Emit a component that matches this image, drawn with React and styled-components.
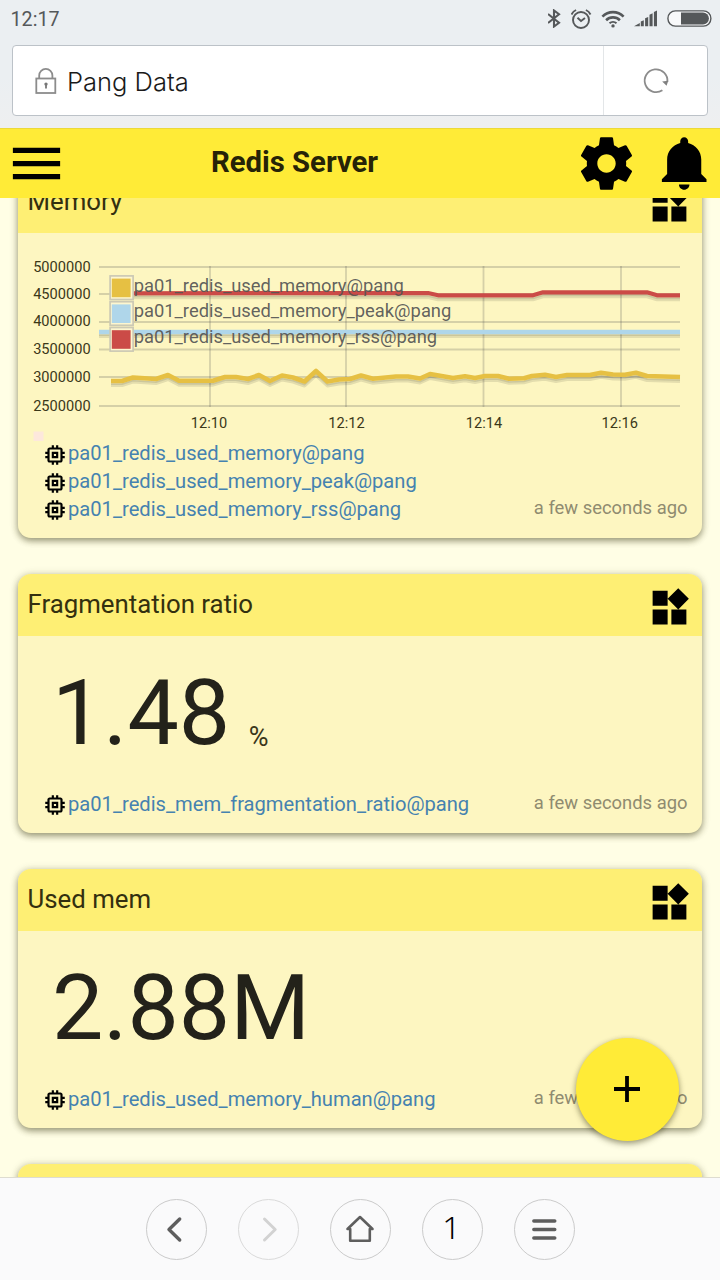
import React from 'react';
import styled, { createGlobalStyle } from 'styled-components';

const GlobalStyle = createGlobalStyle`
  *, *::before, *::after { box-sizing: border-box; }
  body { margin: 0; font-family: Roboto, "Liberation Sans", sans-serif; }
  button { padding: 0; border: 0; background: none; color: inherit; font: inherit; }
  svg { display: block; flex: none; }
`;

const Screen = styled.div`
  position: relative;
  display: flex;
  flex-direction: column;
  width: 720px;
  height: 1280px;
  overflow: hidden;
  background: #fffee5;
`;

/* Phone and browser chrome */
const BrowserTop = styled.div`
  flex: none;
  height: 128px;
  background: linear-gradient(#ebeff2 60%, #eeeff0);
`;

const StatusBar = styled.div`
  display: flex;
  align-items: center;
  justify-content: space-between;
  height: 37px;
  padding: 0 8px 0 10.5px;
  color: #55585a;
`;

const Clock = styled.span`
  font-size: 19.7px;
  line-height: 24px;
  margin-top: 3px;
`;

const StatusIcons = styled.div`
  display: flex;
  align-items: center;
  gap: 9px;
`;

const AddressBar = styled.div`
  display: flex;
  height: 71px;
  margin: 8px 12px 0;
  border: 1px solid #bcc2c8;
  border-radius: 4px;
  background: #fff;
`;

const Address = styled.div`
  flex: 1;
  display: flex;
  align-items: center;
  gap: 10px;
  padding: 2px 0 0 22px;
  color: #1b1b1b;
  font-family: Inter, "Liberation Sans", sans-serif;
  font-size: 25.5px;
  font-weight: 300;
`;

const Reload = styled.button`
  display: flex;
  align-items: center;
  justify-content: center;
  width: 104px;
  border-left: 1px solid #e3e6e8;
`;

/* Application */
const AppBar = styled.header`
  flex: none;
  display: grid;
  grid-template-columns: 75px 1fr 63px 16px 66px;
  align-items: start;
  height: 70px;
  padding: 3px 0 0 5px;
  border-top: 1px solid #ecd93a;
  background: #ffeb37;
`;

const AppTitle = styled.h1`
  margin: 13px 0 0;
  padding-right: 66px;
  font-size: 29.3px;
  line-height: 34px;
  font-weight: 700;
  text-align: center;
  color: #262307;
`;

const BarButton = styled.button`
  display: block;
  width: 63px;
  height: 63px;
`;

const Scroller = styled.main`
  flex: 1;
  min-height: 0;
  overflow: hidden;
`;

const CardList = styled.div`
  display: flex;
  flex-direction: column;
  gap: 36px;
  margin-top: -27px;
  padding: 0 18px;
`;

const Card = styled.section`
  flex: none;
  display: flex;
  flex-direction: column;
  height: ${(p) => p.$height}px;
  border-radius: 13px;
  background: #fdf6c1;
  box-shadow: 0 3px 6px rgba(60, 58, 20, 0.42), 0 1px 9px rgba(60, 58, 20, 0.22);
`;

const CardHeader = styled.div`
  flex: none;
  display: flex;
  justify-content: space-between;
  height: 62px;
  padding: 11px 10px 0 9.5px;
  border-radius: 13px 13px 0 0;
  background: #feef74;
`;

const CardTitle = styled.h2`
  margin: 4px 0 0;
  font-size: 25.8px;
  line-height: 30px;
  font-weight: 400;
  color: #33300f;
`;

const Reading = styled.div`
  flex: 1;
  display: flex;
  align-items: baseline;
  gap: 18.5px;
  padding: 23px 0 0 34px;
  color: #23221a;
  font-size: 91.4px;
  line-height: 107px;
`;

const Unit = styled.span`
  position: relative;
  top: 2px;
  font-size: 27px;
  color: #3a371a;
`;

const CardFooter = styled.div`
  display: flex;
  align-items: flex-end;
  justify-content: space-between;
  padding: 0 14.5px 14px 24px;
`;

const SourceRow = styled.a`
  display: flex;
  align-items: center;
  height: 27.7px;
  color: #4582b0;
  font-size: 20.15px;
  line-height: 26px;

  span { margin-top: -3px; }
`;

const Age = styled.span`
  color: #8f8b70;
  font-size: 18.4px;
  line-height: 22px;
  margin-bottom: 5.5px;
`;

const AddButton = styled.button`
  position: absolute;
  left: 576px;
  top: 1038px;
  display: flex;
  align-items: center;
  justify-content: center;
  width: 103px;
  height: 103px;
  padding: 0 1px 1px 0;
  border-radius: 50%;
  background: #ffeb37;
  box-shadow: 0 3px 6px rgba(60, 58, 20, 0.4), 0 1px 5px rgba(60, 58, 20, 0.2);
`;

const BottomBar = styled.nav`
  flex: none;
  display: flex;
  justify-content: center;
  gap: 31px;
  height: 103px;
  padding-top: 21px;
  border-top: 1px solid #dedcd0;
  background: #fafafb;
`;

const NavButton = styled.button`
  display: flex;
  align-items: center;
  justify-content: center;
  width: 61px;
  height: 61px;
  padding-right: 1px;
  border: 1px solid ${(p) => (p.$dim ? '#dadada' : '#cbcbcb')};
  border-radius: 50%;
  color: ${(p) => (p.$dim ? '#d2d2d2' : '#5e5e5e')};
`;

const TabCount = styled.span`
  color: #000;
  font-family: "Noto Sans", sans-serif;
  font-size: 32px;
  font-weight: 300;
  line-height: 40px;
  margin-top: -5px;
`;

const MaterialIcon = ({ d, size }) => (
  <svg width={size} height={size} viewBox="0 0 24 24" fill="#000"><path d={d} /></svg>
);

const icons = {
  menu: 'M3 18h18v-2H3v2zm0-5h18v-2H3v2zm0-7v2h18V6H3z',
  settings: 'M19.43 12.98c.04-.32.07-.64.07-.98s-.03-.66-.07-.98l2.11-1.65c.19-.15.24-.42.12-.64l-2-3.46c-.12-.22-.39-.3-.61-.22l-2.49 1c-.52-.4-1.08-.73-1.69-.98l-.38-2.65C14.46 2.18 14.25 2 14 2h-4c-.25 0-.46.18-.49.42l-.38 2.65c-.61.25-1.17.59-1.69.98l-2.49-1c-.23-.09-.49 0-.61.22l-2 3.46c-.13.22-.07.49.12.64l2.11 1.65c-.04.32-.07.65-.07.98s.03.66.07.98l-2.11 1.65c-.19.15-.24.42-.12.64l2 3.46c.12.22.39.3.61.22l2.49-1c.52.4 1.08.73 1.69.98l.38 2.65c.03.24.24.42.49.42h4c.25 0 .46-.18.49-.42l.38-2.65c.61-.25 1.17-.59 1.69-.98l2.49 1c.23.09.49 0 .61-.22l2-3.46c.12-.22.07-.49-.12-.64l-2.11-1.65zM12 15.5c-1.93 0-3.5-1.57-3.5-3.5s1.57-3.5 3.5-3.5 3.5 1.57 3.5 3.5-1.57 3.5-3.5 3.5z',
  bell: 'M11.5 22c1.1 0 2-.9 2-2h-4c0 1.1.9 2 2 2zm6.5-6v-5.5c0-3.07-2.13-5.64-5-6.32V3.5c0-.83-.67-1.5-1.5-1.5S10 2.67 10 3.5v.68c-2.87.68-5 3.25-5 6.32V16l-2 2v1h17v-1l-2-2z',
  widgets: 'M13 13v8h8v-8h-8zM3 21h8v-8H3v8zM3 3v8h8V3H3zm13.66-1.31L11 7.34 16.66 13l5.66-5.66-5.66-5.65z',
  memory: 'M15 9H9v6h6V9zm-2 4h-2v-2h2v2zm8-2V9h-2V7c0-1.1-.9-2-2-2h-2V3h-2v2h-2V3H9v2H7c-1.1 0-2 .9-2 2v2H3v2h2v2H3v2h2v2c0 1.1.9 2 2 2h2v2h2v-2h2v2h2v-2h2c1.1 0 2-.9 2-2v-2h2v-2h-2v-2h2zm-4 6H7V7h10v10z',
};

const BluetoothIcon = () => (
  <svg width="14" height="19" viewBox="0 0 14 19" fill="none" stroke="currentColor" strokeWidth="2.1" strokeLinejoin="miter">
    <path d="M0 5l11 8.8-5 3.7V1.5l5 3.7L0 14" />
  </svg>
);

const AlarmIcon = () => (
  <svg width="21" height="20" viewBox="0 0 21 20" fill="none" stroke="currentColor" strokeWidth="1.9">
    <circle cx="10" cy="11" r="8" />
    <path d="M6.5 8.8l3.5 3.2 4-3M.5 5.5C1.5 3.4 2.8 2 5.1 1M19.5 5.5c-1-2.1-2.3-3.5-4.6-4.5" />
  </svg>
);

const WifiIcon = () => (
  <svg width="24" height="18" viewBox="0 0 24 18" fill="none" stroke="currentColor" strokeWidth="2.6">
    <path d="M1.4 6.7C7.3.6 16.7.6 22.6 6.7" />
    <path d="M5.1 10.2c3.9-3.8 9.9-3.8 13.8 0" />
    <path d="M8.5 13.3c2-1.9 5-1.9 7 0" strokeWidth="2" />
    <circle cx="12" cy="15.9" r="1.7" fill="currentColor" stroke="none" />
  </svg>
);

const SignalIcon = () => (
  <svg width="24" height="17" viewBox="0 0 24 17" fill="currentColor">
    <path d="M0 16.2l5.8-3.2v3.2zM6.8 11.5l3-1.2v5.9h-3zM11.1 8.3l3.1-1.3v9.2h-3.1zM15.5 4.8l3.1-1.5v12.9h-3.1zM19.9 2L23 .5v15.7h-3.1z" />
  </svg>
);

const BatteryIcon = () => (
  <svg width="45" height="17" viewBox="0 0 45 17">
    <rect x="0.9" y="0.9" width="43" height="15.2" rx="7.5" fill="#f8f9fa" stroke="currentColor" strokeWidth="1.4" />
    <path d="M14 2.6h22a5.9 5.9 0 010 11.8H14z" fill="currentColor" />
  </svg>
);

const LockIcon = () => (
  <svg width="22" height="27" viewBox="0 0 22 27" fill="none" stroke="#8c8c8c" strokeWidth="1.8">
    <rect x="1.3" y="10.5" width="19" height="14.5" />
    <path d="M4.2 10.5V7.5a6.6 6.6 0 0113.2 0v3" />
    <circle cx="11" cy="16.1" r="1.7" fill="#777" stroke="none" />
    <path d="M11 15.5v5" stroke="#777" />
  </svg>
);

const ReloadIcon = () => (
  <svg width="28" height="28" viewBox="0 0 28 28" fill="none" stroke="#8c8c8c" strokeWidth="1.8">
    <path d="M20.4 23.2A11.4 11.4 0 1125.4 15" />
    <path d="M20.2 14.4l6-.6-1.6 5z" fill="#808080" stroke="none" />
  </svg>
);

const OX = 18;
const OY = 233;

const yTicks = [
  [5000000, 267, 272], [4500000, 294, 299], [4000000, 322, 326.3],
  [3500000, 349.5, 354.2], [3000000, 377, 381.5], [2500000, 406, 411],
];
const xTicks = [['12:10', 210, 209], ['12:12', 346, 346.5], ['12:14', 483.5, 484], ['12:16', 621, 619.7]];

const series = [
  { color: '#e6c043', name: 'pa01_redis_used_memory@pang', width: 4.6, points: '111,381 122,381 133,377.5 156,379 168,375 179,380.7 213,380.7 225,377 236,377 248,379 259,375 270,381 282,375.5 293,377.5 304.5,381.5 316,371 327.5,381.5 339,379.5 350,379 361,375.5 373,378.7 396,376.5 408,376.5 420,378.5 430,374 453,378 465,376.3 475,378 485,376 498,376 509,378.8 524,378.3 532,376 545,374.7 556,377 567,375 590,375 601,372.7 613,374.5 625,374.8 636,372.8 647,376 680,377' },
  { color: '#afd6ea', name: 'pa01_redis_used_memory_peak@pang', width: 4.6, points: '99,332 680,332' },
  { color: '#cb4b47', name: 'pa01_redis_used_memory_rss@pang', width: 4.2, points: '111,293.3 428,293 438,295.3 533,295.3 543,292.3 647,292.3 657,295.3 680,295.3' },
];

const MemoryChart = () => (
  <svg width="684" height="208" viewBox={`${OX} ${OY} 684 208`} fontFamily="Roboto, sans-serif">
    <g fill="#3b3819" fontSize="14.6">
      {yTicks.map(([v, , base]) => <text key={v} x="90.6" y={base} textAnchor="end">{v}</text>)}
      {xTicks.map(([t, , x]) => <text key={t} x={x} y="427.5" textAnchor="middle">{t}</text>)}
    </g>
    <g stroke="#545454" strokeOpacity="0.23" strokeWidth="1.8">
      {yTicks.map(([v, y]) => <path key={v} d={`M99 ${y}H680`} />)}
      {xTicks.map(([t, x]) => <path key={t} d={`M${x} 266V407`} />)}
    </g>
    {series.map((s) => (
      <g key={s.name} fill="none" strokeLinejoin="round">
        <polyline points={s.points} stroke="#000" strokeOpacity="0.1" strokeWidth="3.6" transform="translate(0 4.2)" />
        <polyline points={s.points} stroke="#000" strokeOpacity="0.1" strokeWidth="2" transform="translate(0 3)" />
        <polyline points={s.points} stroke={s.color} strokeWidth={s.width} />
      </g>
    ))}
    {series.map((s, i) => (
      <g key={s.name} transform={`translate(0 ${i * 25.8})`}>
        <rect x="110.1" y="275.9" width="23" height="23.6" fill="#fdf6cf" stroke="#ccc9b4" strokeWidth="1.7" />
        <rect x="111.8" y="278.6" width="18.8" height="18.6" fill={s.color} />
        <text x="133.7" y="291.6" fontSize="18.35" fill="#545454" fillOpacity="0.92">{s.name}</text>
      </g>
    ))}
    <rect x="33.5" y="431.5" width="10" height="10" fill="#fde8dc" />
  </svg>
);

const WidgetCard = ({ title, height, sources, children }) => (
  <Card $height={height}>
    <CardHeader>
      <CardTitle>{title}</CardTitle>
      <MaterialIcon d={icons.widgets} size={45} />
    </CardHeader>
    {children}
    {sources && (
      <CardFooter>
        <div>
          {sources.map((name) => (
            <SourceRow key={name}>
              <MaterialIcon d={icons.memory} size={26} />
              <span>{name}</span>
            </SourceRow>
          ))}
        </div>
        <Age>a few seconds ago</Age>
      </CardFooter>
    )}
  </Card>
);

export default function App() {
  return (
    <Screen>
      <GlobalStyle />
      <BrowserTop>
        <StatusBar>
          <Clock>12:17</Clock>
          <StatusIcons>
            <BluetoothIcon />
            <AlarmIcon />
            <WifiIcon />
            <SignalIcon />
            <BatteryIcon />
          </StatusIcons>
        </StatusBar>
        <AddressBar>
          <Address><LockIcon />Pang Data</Address>
          <Reload><ReloadIcon /></Reload>
        </AddressBar>
      </BrowserTop>

      <AppBar>
        <BarButton><MaterialIcon d={icons.menu} size={63} /></BarButton>
        <AppTitle>Redis Server</AppTitle>
        <BarButton><MaterialIcon d={icons.settings} size={63} /></BarButton>
        <span />
        <BarButton><MaterialIcon d={icons.bell} size={63} /></BarButton>
      </AppBar>

      <Scroller>
        <CardList>
          <WidgetCard title="Memory" height={367} sources={series.map((s) => s.name)}>
            <MemoryChart />
          </WidgetCard>
          <WidgetCard title="Fragmentation ratio" height={259} sources={['pa01_redis_mem_fragmentation_ratio@pang']}>
            <Reading>1.48<Unit>%</Unit></Reading>
          </WidgetCard>
          <WidgetCard title="Used mem" height={259} sources={['pa01_redis_used_memory_human@pang']}>
            <Reading>2.88M</Reading>
          </WidgetCard>
          <Card $height={259}><CardHeader /></Card>
        </CardList>
      </Scroller>

      <AddButton>
        <svg width="26" height="26" viewBox="0 0 26 26" stroke="#000" strokeWidth="3.8">
          <path d="M0 13h26M13 0v26" />
        </svg>
      </AddButton>

      <BottomBar>
        <NavButton>
          <svg width="30" height="30" viewBox="0 0 30 30" fill="none" stroke="currentColor" strokeWidth="3.4" strokeLinecap="round" strokeLinejoin="round">
            <path d="M18.7 4L8 14.5 18.7 25" />
          </svg>
        </NavButton>
        <NavButton $dim>
          <svg width="30" height="30" viewBox="0 0 30 30" fill="none" stroke="currentColor" strokeWidth="3" strokeLinecap="round" strokeLinejoin="round">
            <path d="M11.5 4L22.2 14.5 11.5 25" />
          </svg>
        </NavButton>
        <NavButton>
          <svg width="30" height="30" viewBox="0 0 30 30" fill="none" stroke="currentColor" strokeWidth="2.6" strokeLinecap="round" strokeLinejoin="round">
            <path d="M2.5 14L15 2l12.5 12h-2.7v11.7H5.2V14z" />
          </svg>
        </NavButton>
        <NavButton><TabCount>1</TabCount></NavButton>
        <NavButton>
          <svg width="30" height="30" viewBox="0 0 30 30" stroke="currentColor" strokeWidth="3.4" strokeLinecap="round">
            <path d="M4.8 6h21M4.8 14.5h21M4.8 23h21" />
          </svg>
        </NavButton>
      </BottomBar>
    </Screen>
  );
}
